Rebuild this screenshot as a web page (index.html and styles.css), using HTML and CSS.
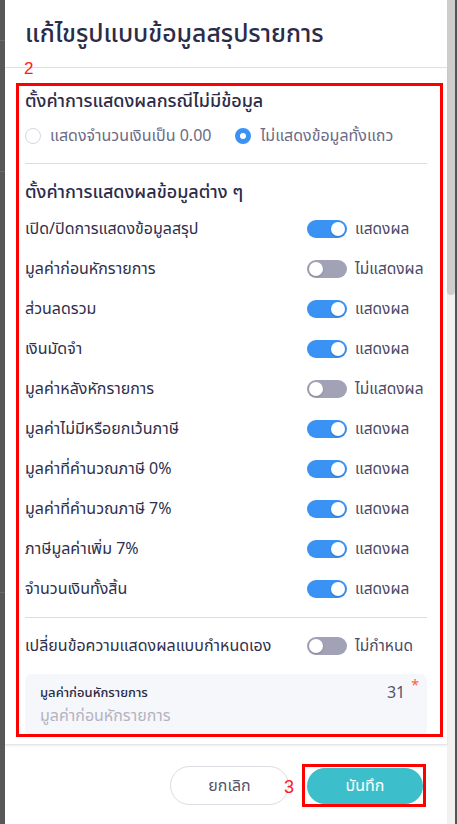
FILE: index.html
```html
<!DOCTYPE html>
<html lang="th">
<head>
<meta charset="utf-8">
<title>แก้ไขรูปแบบข้อมูลสรุปรายการ</title>
<link rel="stylesheet" href="styles.css">
</head>
<body>
<div class="screen">
  <div class="backdrop-left">
    <div class="bg-line l1"></div>
    <div class="bg-line l2"></div>
    <div class="bg-line l3"></div>
  </div>
  <div class="modal">
    <span class="anno anno-2">2</span>
    <div class="modal-header">
      <h1 class="modal-title">แก้ไขรูปแบบข้อมูลสรุปรายการ</h1>
    </div>
    <div class="modal-body">
      <div class="anno-box anno-box-body"></div>

      <div class="section-title first">ตั้งค่าการแสดงผลกรณีไม่มีข้อมูล</div>
      <div class="radio-row">
        <label class="radio"><span class="radio-dot"></span><span class="radio-text">แสดงจำนวนเงินเป็น 0.00</span></label>
        <label class="radio checked"><span class="radio-dot"></span><span class="radio-text">ไม่แสดงข้อมูลทั้งแถว</span></label>
      </div>
      <div class="divider d1"></div>

      <div class="section-title second">ตั้งค่าการแสดงผลข้อมูลต่าง ๆ</div>
      <div class="rows">
        <div class="row"><span class="row-label">เปิด/ปิดการแสดงข้อมูลสรุป</span><span class="switch on"></span><span class="state">แสดงผล</span></div>
        <div class="row"><span class="row-label">มูลค่าก่อนหักรายการ</span><span class="switch"></span><span class="state">ไม่แสดงผล</span></div>
        <div class="row"><span class="row-label">ส่วนลดรวม</span><span class="switch on"></span><span class="state">แสดงผล</span></div>
        <div class="row"><span class="row-label">เงินมัดจำ</span><span class="switch on"></span><span class="state">แสดงผล</span></div>
        <div class="row"><span class="row-label">มูลค่าหลังหักรายการ</span><span class="switch"></span><span class="state">ไม่แสดงผล</span></div>
        <div class="row"><span class="row-label">มูลค่าไม่มีหรือยกเว้นภาษี</span><span class="switch on"></span><span class="state">แสดงผล</span></div>
        <div class="row"><span class="row-label">มูลค่าที่คำนวณภาษี 0%</span><span class="switch on"></span><span class="state">แสดงผล</span></div>
        <div class="row"><span class="row-label">มูลค่าที่คำนวณภาษี 7%</span><span class="switch on"></span><span class="state">แสดงผล</span></div>
        <div class="row"><span class="row-label">ภาษีมูลค่าเพิ่ม 7%</span><span class="switch on"></span><span class="state">แสดงผล</span></div>
        <div class="row"><span class="row-label">จำนวนเงินทั้งสิ้น</span><span class="switch on"></span><span class="state">แสดงผล</span></div>
      </div>
      <div class="divider d2"></div>
      <div class="row custom"><span class="row-label">เปลี่ยนข้อความแสดงผลแบบกำหนดเอง</span><span class="switch"></span><span class="state">ไม่กำหนด</span></div>

      <div class="field">
        <div class="field-top">
          <span class="field-label">มูลค่าก่อนหักรายการ</span>
          <span class="field-count">31</span><span class="field-req">*</span>
        </div>
        <div class="field-input">มูลค่าก่อนหักรายการ</div>
      </div>
    </div>
    <div class="modal-footer">
      <button class="btn btn-cancel">ยกเลิก</button>
      <div class="save-wrap">
        <span class="anno anno-3">3</span>
        <button class="btn btn-save">บันทึก</button>
        <div class="anno-box anno-box-save"></div>
      </div>
    </div>
  </div>
  <div class="scrollbar"><div class="thumb"></div></div>
  <div class="backdrop-right"></div>
</div>
</body>
</html>
```
FILE: styles.css
```css
* { box-sizing: border-box; }
html, body { margin: 0; padding: 0; }
body {
  font-family: "Noto Sans", "Noto Sans Thai", "DejaVu Sans", sans-serif;
  color: #2f2f4c;
  background: #5a5a5a;
}
.screen {
  display: flex;
  width: 457px;
  height: 824px;
  overflow: hidden;
}
.backdrop-left {
  width: 5px;
  background: #585858;
  display: flex;
  flex-direction: column;
  padding-top: 40px;
}
.bg-line { height: 1px; background: #6a6a6a; margin-bottom: 60px; }
.bg-line.l1 { margin-bottom: 130px; }
.bg-line.l2 { margin-bottom: 420px; }

.modal {
  position: relative;
  width: 442px;
  height: 824px;
  background: #fff;
  display: flex;
  flex-direction: column;
}
.modal-header {
  height: 68px;
  border-bottom: 1px solid #e1e1ea;
  padding: 16px 20px 0 20px;
}
.modal-title {
  margin: 0;
  font-size: 24.8px;
  font-weight: 500;
  line-height: 32px;
  color: #2c2c48;
}
.modal-body {
  position: relative;
  height: 677px;
  padding: 20px 20px 0 20px;
  overflow: hidden;
  border-bottom: 1px solid #e6e6e6;
  box-shadow: 0 1px 2px rgba(0,0,0,0.08);
}
.anno {
  position: absolute;
  color: #ff1a1a;
  font-family: "Liberation Sans", sans-serif;
  font-size: 17px;
  line-height: 18px;
  z-index: 2;
}
.anno-2 { left: 19px; top: 60px; }
.anno-box {
  position: absolute;
  border: 3px solid #ff0000;
  pointer-events: none;
}
.anno-box-body { left: 11px; top: 15px; width: 427px; height: 654px; }

.section-title {
  font-size: 18px;
  line-height: 24px;
  font-weight: 500;
  color: #2c2c48;
}
.radio-row {
  display: flex;
  align-items: center;
  height: 24px;
  margin-top: 12px;
  gap: 24px;
}
.radio {
  display: flex;
  align-items: center;
  gap: 9px;
  font-size: 16px;
  color: #6b6b85;
}
.radio-dot {
  width: 16px;
  height: 16px;
  border-radius: 50%;
  border: 1px solid #d6d6e0;
  background: #fff;
}
.radio.checked .radio-dot {
  border: 5px solid #3a92f5;
  background: #fff;
}
.divider { height: 1px; background: #dcdce6; }
.divider.d1 { margin-top: 15px; }
.section-title.second { margin-top: 15px; }
.rows { margin-top: 6px; }
.row {
  display: flex;
  align-items: center;
  height: 40px;
}
.row-label {
  flex: 1;
  font-size: 16px;
  color: #2f2f4c;
}
.switch {
  position: relative;
  width: 40px;
  height: 18px;
  border-radius: 9px;
  background: #a2a2b6;
}
.switch::after {
  content: "";
  position: absolute;
  top: 2px;
  left: 2px;
  width: 14px;
  height: 14px;
  border-radius: 50%;
  background: #fff;
  box-shadow: 0 1px 2px rgba(0,0,0,0.2);
}
.switch.on { background: #3a92f5; }
.switch.on::after { left: 24px; }
.state {
  width: 72px;
  margin-left: 8px;
  font-size: 15.5px;
  color: #4a4a66;
  white-space: nowrap;
}
.divider.d2 { margin-top: 8px; }
.row.custom { margin-top: 8px; }

.field {
  margin-top: 8px;
  height: 62px;
  background: #f6f7fb;
  border-radius: 6px;
  padding: 8px 8px 0 15px;
}
.field-top {
  display: flex;
  align-items: flex-start;
}
.field-label {
  flex: 1;
  font-size: 13px;
  font-weight: 500;
  color: #2a2a44;
  line-height: 20px;
}
.field-count {
  font-size: 16px;
  color: #55556e;
  line-height: 20px;
}
.field-req {
  color: #f0643c;
  font-size: 14px;
  line-height: 14px;
  margin-left: 6px;
  margin-top: -4px;
}
.field-input {
  font-size: 16px;
  color: #b3b3c3;
  line-height: 22px;
  margin-top: 2px;
}

.modal-footer {
  flex: 1;
  display: flex;
  align-items: flex-start;
  justify-content: flex-end;
  padding: 21px 24px 0 0;
  gap: 18px;
}
.btn {
  font-family: inherit;
  font-size: 16px;
  border-radius: 20px;
  cursor: pointer;
}
.btn-cancel {
  width: 119px;
  height: 39px;
  background: #fff;
  border: 1px solid #dcdce2;
  color: #55556a;
}
.save-wrap {
  position: relative;
  margin-top: 2px;
}
.btn-save {
  display: block;
  width: 116px;
  height: 36px;
  border: none;
  background: #3dbfcb;
  color: #fff;
  border-radius: 18px;
}
.anno-box-save { left: -5px; top: -4px; width: 124px; height: 43px; }
.anno-3 { left: -23px; top: 10px; font-size: 18px; }

.scrollbar {
  width: 8px;
  background: #f1f1f1;
}
.thumb {
  height: 295px;
  background: #cdcdcd;
  border-radius: 0 0 4px 4px;
}
.backdrop-right {
  width: 2px;
  background: #555;
}
```
